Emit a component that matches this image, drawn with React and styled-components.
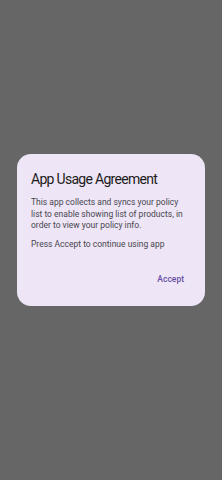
import React from "react";
import styled, { createGlobalStyle } from "styled-components";

const GlobalStyle = createGlobalStyle`
  html, body {
    margin: 0;
    padding: 0;
    background: #666666;
  }
  body {
    font-family: Roboto, "Liberation Sans", sans-serif;
    -webkit-font-smoothing: antialiased;
  }
`;

const Scrim = styled.div`
  width: 222px;
  height: 480px;
  background-color: #666666;
  display: flex;
  align-items: center;
  justify-content: center;
  box-sizing: border-box;
`;

const Dialog = styled.div`
  width: 188px;
  height: 152px;
  margin-bottom: 20px;
  box-sizing: border-box;
  background-color: #eee6f6;
  border-radius: 14px;
  padding: 15px 14px 18px 14px;
  display: flex;
  flex-direction: column;
`;

const Title = styled.h2`
  margin: 0 0 8px 0;
  font-size: 14px;
  line-height: 20px;
  font-weight: 400;
  color: #1d1b20;
  letter-spacing: -0.7px;
`;

const Body = styled.p`
  margin: 0 0 7px 0;
  font-size: 8.5px;
  line-height: 11.5px;
  color: #49454f;
`;

const Actions = styled.div`
  margin-top: auto;
  display: flex;
  justify-content: flex-end;
`;

const TextButton = styled.button`
  border: none;
  background: transparent;
  padding: 4px 7px;
  font-family: inherit;
  font-size: 8.5px;
  font-weight: 500;
  color: #6750a4;
  cursor: pointer;
`;

const App = () => {
  return (
    <>
      <GlobalStyle />
      <Scrim>
        <Dialog>
          <Title>App Usage Agreement</Title>
          <Body>
            This app collects and syncs your policy list to enable showing list
            of products, in order to view your policy info.
          </Body>
          <Body>Press Accept to continue using app</Body>
          <Actions>
            <TextButton>Accept</TextButton>
          </Actions>
        </Dialog>
      </Scrim>
    </>
  );
};

export default App;
